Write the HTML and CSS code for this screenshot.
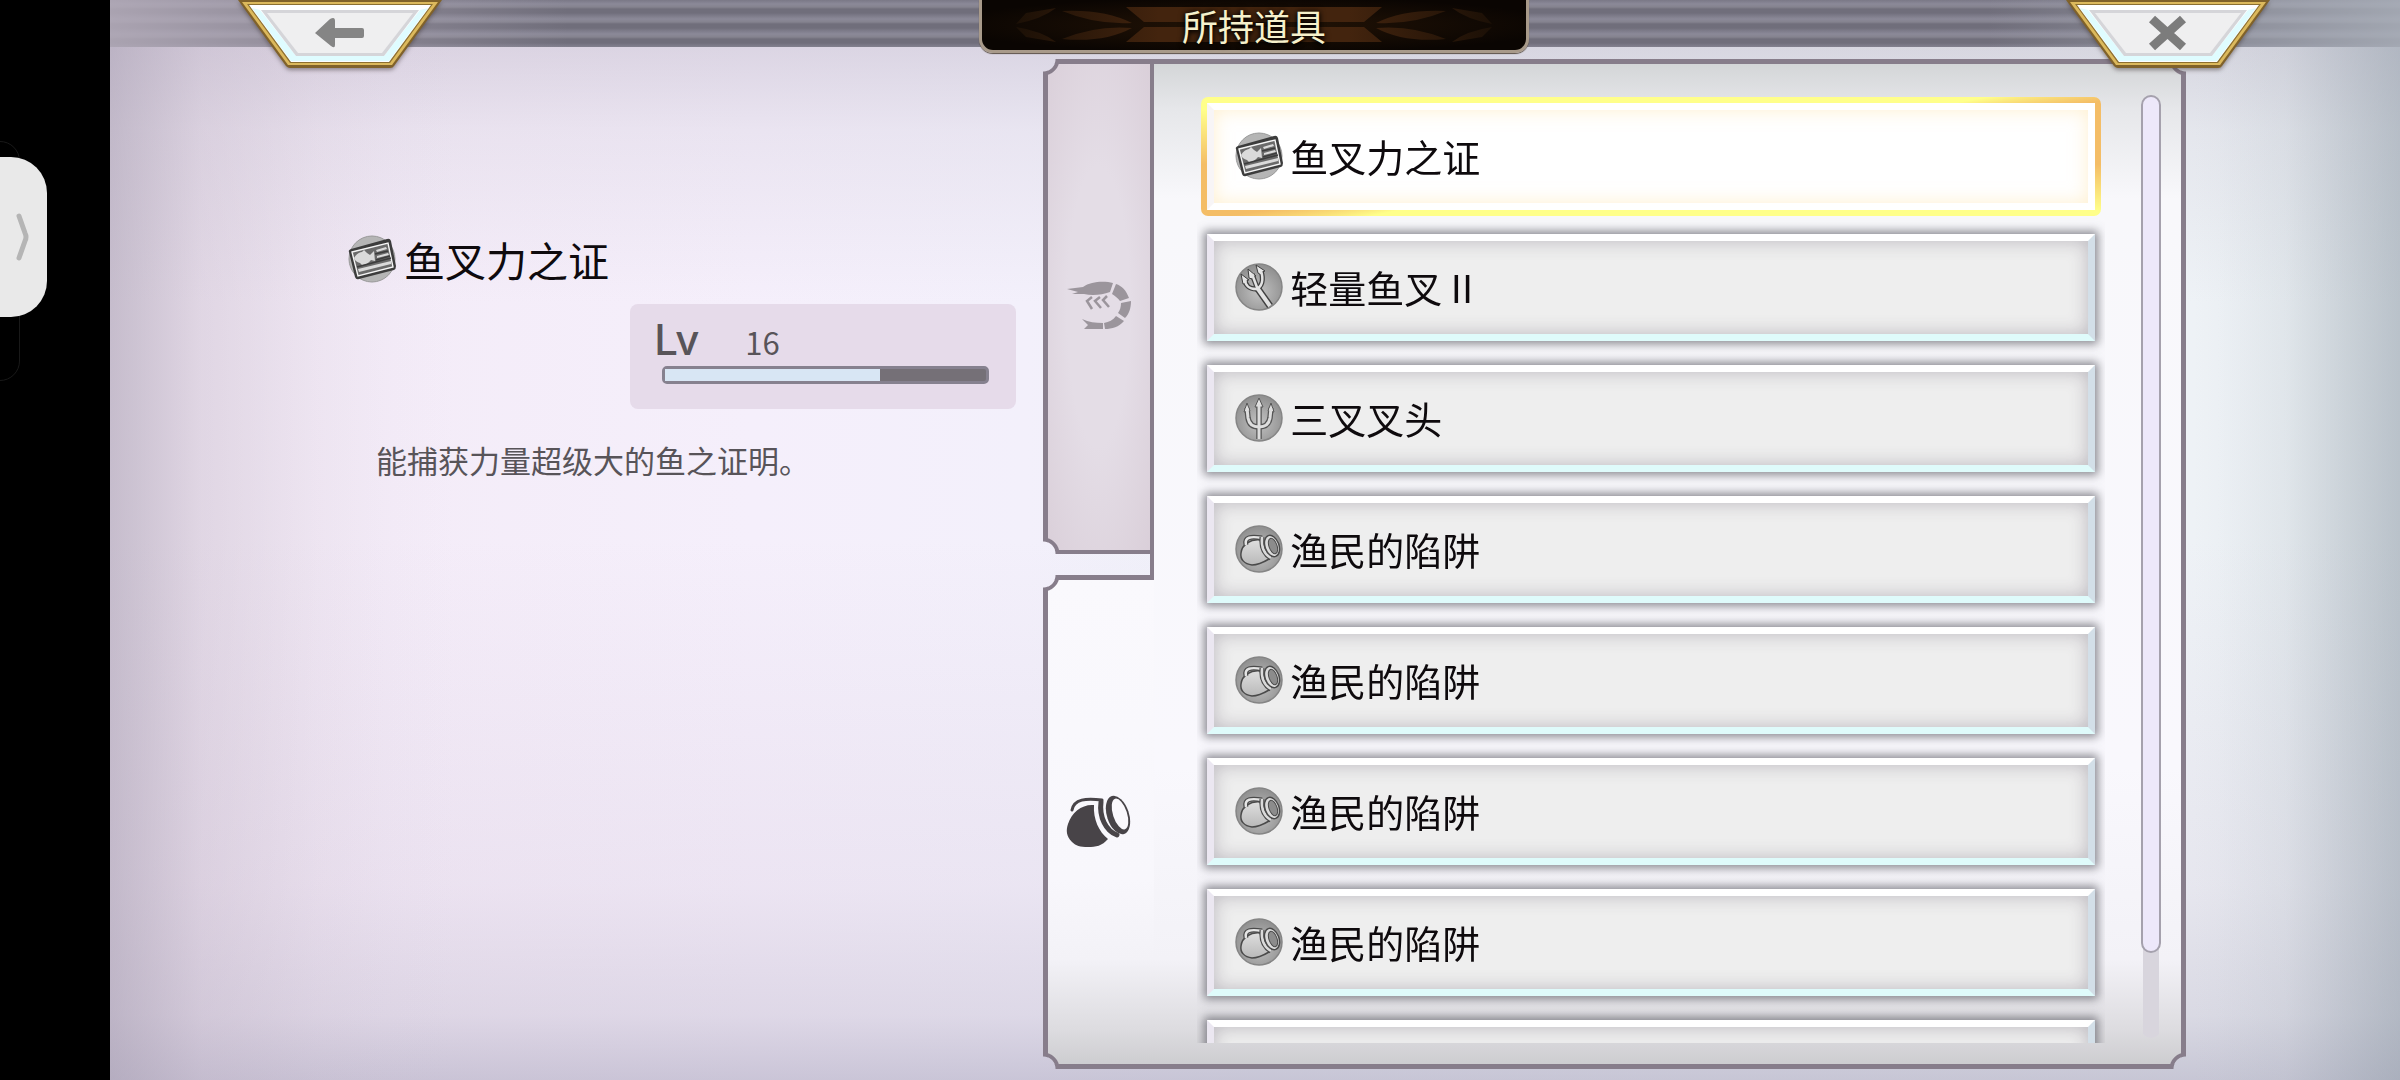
FILE: index.html
```
<!DOCTYPE html>
<html lang="zh-CN">
<head>
    <meta charset="UTF-8">
    <meta name="viewport" content="width=device-width, initial-scale=1.0">
    <title>所持道具</title>
    <link rel="stylesheet" href="styles.css">
</head>
<body>
    <!-- Item icons -->
    <svg class="sprite" width="0" height="0" aria-hidden="true">
        <defs>
            <radialGradient id="disc" cx="50%" cy="60%" r="55%">
                <stop offset="0" stop-color="#c2c2c2"/>
                <stop offset="1" stop-color="#929292"/>
            </radialGradient>
            <linearGradient id="clay" x1="0" y1="0" x2="0" y2="1">
                <stop offset="0" stop-color="#dedede"/>
                <stop offset="1" stop-color="#b9b9b9"/>
            </linearGradient>
        </defs>
        <symbol id="icon-card" viewBox="0 0 48 48">
            <circle cx="24" cy="24" r="23" fill="#b5b5b5" stroke="#999"/>
            <path d="M1 17 Q0 15 3 14 L39 4 Q42 3 43 6 L48 31 Q48 34 46 35 L11 44 Q8 45 7 42Z" fill="#3c3c3c"/>
            <path d="M4 17 L40 8 L45 32 L10 41Z" fill="#6a6a6a" stroke="#f5f5f5" stroke-width="1.4"/>
            <path d="M6 23 C8 19 12 17 14 17 L16 15 L19 18 L22 20 L26 16 L27 26 L23 25 C21 28 17 30 14 30 L12 28 C9 27 7 26 6 23Z" fill="#dadada"/>
            <path d="M28 15 L38 12 L39 14 L29 17Z M29 21 L40 18 L41 20 L29 23Z M10 34 L43 26 L43 29 L11 37Z" fill="#dadada"/>
            <path d="M27 19 L40 16 M28 25 L42 21 M9 32 L43 23" stroke="#3c3c3c" stroke-width="1.5" fill="none"/>
        </symbol>
        <symbol id="icon-harpoon" viewBox="0 0 48 48">
            <circle cx="24" cy="24" r="23" fill="url(#disc)" stroke="#858585" stroke-width="1.5"/>
            <g fill="none" stroke="#3f3f3f" stroke-width="5">
                <path d="M10 16 C10 22 14 26 21 26 C27 24 29 17 26 8"/>
                <path d="M17 11 L23 27"/>
                <path d="M23 26 L35 43" stroke-width="7"/>
            </g>
            <path d="M6 11 L14 17 L12 17 L12 20 L8 21Z M13 6 L21 13 L18 13 L17 16 L14 15Z M21 2 L30 8 L27 9 L26 12 L23 10Z" fill="#e6e6e6" stroke="#3f3f3f"/>
            <g fill="none" stroke="#e2e2e2" stroke-width="2.5">
                <path d="M10 16 C10 22 14 26 21 26 C27 24 29 17 26 8"/>
                <path d="M17 11 L23 27"/>
                <path d="M23 26 L35 43" stroke-width="4"/>
            </g>
        </symbol>
        <symbol id="icon-trident" viewBox="0 0 48 48">
            <circle cx="24" cy="24" r="23" fill="url(#disc)" stroke="#858585" stroke-width="1.5"/>
            <g fill="none" stroke="#555" stroke-width="5.5">
                <path d="M12 14 L13 24 C14 30 18 33 24 33 C30 33 34 30 35 24 L36 14"/>
                <path d="M24 10 V45"/>
            </g>
            <path d="M24 4 L28 13 H20Z M12 9 L15 17 L9 18Z M36 9 L39 18 L33 17Z" fill="#e2e2e2" stroke="#555"/>
            <g fill="none" stroke="#dedede" stroke-width="3">
                <path d="M12 14 L13 24 C14 30 18 33 24 33 C30 33 34 30 35 24 L36 14"/>
                <path d="M24 10 V45"/>
            </g>
        </symbol>
        <symbol id="icon-pot" viewBox="0 0 48 48">
            <circle cx="24" cy="24" r="23" fill="url(#disc)" stroke="#858585" stroke-width="1.5"/>
            <path d="M25 15 C16 14 7 19 6 28 C5 34 9 39 17 40 C24 40 29 37 34 34Z" fill="url(#clay)" stroke="#4a4a4a" stroke-width="1.5"/>
            <path d="M11 20 C9 12 16 11 27 13" fill="none" stroke="#4a4a4a" stroke-width="5"/>
            <path d="M11 20 C9 12 16 11 27 13" fill="none" stroke="#e5e5e5" stroke-width="2.5"/>
            <path d="M27 12 C26 22 29 29 36 33" fill="none" stroke="#4a4a4a" stroke-width="5"/>
            <path d="M27 12 C26 22 29 29 36 33" fill="none" stroke="#dadada" stroke-width="2.5"/>
            <ellipse cx="37" cy="21" rx="7" ry="11" transform="rotate(-20 37 21)" fill="#dcdcdc" stroke="#4a4a4a" stroke-width="1.5"/>
            <ellipse cx="38" cy="21" rx="4" ry="8" transform="rotate(-20 38 21)" fill="#8c8c8c" stroke="#4a4a4a"/>
        </symbol>
    </svg>

    <div class="screen">
        <aside class="side-strip">
            <div class="edge-outline"></div>
            <button class="edge-handle" aria-label="展开">
                <svg width="16" height="52" viewBox="0 0 16 52" aria-hidden="true">
                    <path d="M4 5 L10 22 Q12 26 10 30 L4 47" fill="none" stroke="#b5b5b5" stroke-width="5" stroke-linecap="round" stroke-linejoin="round"/>
                </svg>
            </button>
        </aside>

        <div class="game">
            <header class="top-bar">
                <button class="corner-btn" aria-label="返回">
                    <svg width="204" height="70" viewBox="0 0 204 70" aria-hidden="true">
                        <path d="M0 0 H204 L156 66 Q155 68 152 68 H52 Q50 68 48 66Z" fill="#80622a"/>
                        <path d="M4 2 H200 L154 65 H50Z" fill="#dcb95c"/>
                        <path d="M9 4 H195 L152 63 H52Z" fill="#8c7031"/>
                        <path d="M11 5 H193 L151 62 H53Z" fill="#fff"/>
                        <path d="M14 8 L22 10 L58 56 H146 L182 10 L190 8 L151 61 H53Z" fill="#dffcff"/>
                        <path d="M23 10 H181 L146 56 H58Z" fill="#d5d5d9"/>
                        <path d="M29 13 H175 L144 53 H60Z" fill="#efeff0"/>
                        <path d="M77 33 L92 19 Q97 16 97 21 V28 H124 Q126 28 126 30 V36 Q126 38 124 38 H97 V45 Q97 49 93 46Z" fill="#858585"/>
                    </svg>
                </button>
                <div class="title-plate">
                    <svg class="title-ornament" width="480" height="44" viewBox="0 0 480 44" aria-hidden="true">
                        <defs>
                            <linearGradient id="bronze">
                                <stop offset="0" stop-color="#1c1006"/>
                                <stop offset="0.3" stop-color="#43240e"/>
                                <stop offset="0.7" stop-color="#43240e"/>
                                <stop offset="1" stop-color="#1c1006"/>
                            </linearGradient>
                        </defs>
                        <path fill="url(#bronze)" d="M112 4 H368 L350 19 H130Z M130 24 H350 L368 39 H112Z M48 8 Q90 6 118 20 Q82 22 48 8Z M48 36 Q82 22 118 25 Q90 40 48 36Z M432 8 Q390 6 362 20 Q398 22 432 8Z M432 36 Q398 22 362 25 Q390 40 432 36Z M2 21 Q28 16 42 5 L12 10Z M2 24 Q28 28 42 39 L12 34Z M478 21 Q452 16 438 5 L468 10Z M478 24 Q452 28 438 39 L468 34Z"/>
                    </svg>
                    <h1>所持道具</h1>
                </div>
                <button class="corner-btn" aria-label="关闭">
                    <svg width="204" height="70" viewBox="0 0 204 70" aria-hidden="true">
                        <path d="M0 0 H204 L156 66 Q155 68 152 68 H52 Q50 68 48 66Z" fill="#80622a"/>
                        <path d="M4 2 H200 L154 65 H50Z" fill="#dcb95c"/>
                        <path d="M9 4 H195 L152 63 H52Z" fill="#8c7031"/>
                        <path d="M11 5 H193 L151 62 H53Z" fill="#fff"/>
                        <path d="M14 8 L22 10 L58 56 H146 L182 10 L190 8 L151 61 H53Z" fill="#dffcff"/>
                        <path d="M23 10 H181 L146 56 H58Z" fill="#d5d5d9"/>
                        <path d="M29 13 H175 L144 53 H60Z" fill="#efeff0"/>
                        <path d="M86 19 L117 47 M117 19 L86 47" stroke="#7c7c7c" stroke-width="9"/>
                    </svg>
                </button>
            </header>

            <main class="content">
                <section class="detail">
                    <h2 class="detail-name">
                        <svg class="icon" aria-hidden="true"><use href="#icon-card"/></svg>
                        鱼叉力之证
                    </h2>
                    <div class="level-box">
                        <div class="level-row">
                            <span class="level-label">Lv</span>
                            <span class="level-value">16</span>
                        </div>
                        <div class="level-bar" role="progressbar" aria-label="Lv" aria-valuenow="67" aria-valuemin="0" aria-valuemax="100">
                            <div class="level-fill" style="width: 67%"></div>
                        </div>
                    </div>
                    <p class="detail-text">能捕获力量超级大的鱼之证明。</p>
                </section>

                <section class="panel">
                    <nav class="tabs">
                        <button class="tab" aria-label="渔获">
                            <svg width="64" height="50" viewBox="0 0 64 50" fill="#9b959c" aria-hidden="true">
                                <path d="M0 8 L16 6 C24 0 38 0 46 2 L43 11 C35 14 25 15 17 13 L5 13 L11 11Z"/>
                                <path d="M49 3 C55 5 59 9 62 17 L53 20 C51 17 48 15 45 13Z"/>
                                <path d="M54 22 L64 20 C64 27 62 33 58 37 L51 32 C53 29 54 26 54 22Z"/>
                                <path d="M49 35 L57 40 C52 46 45 48 38 48 L37 42 C42 41 46 39 49 35Z"/>
                                <path d="M36 42 V48 H17 L21 44 L15 38 C22 41 28 42 36 42Z"/>
                                <path d="M25 16 L20 20 L25 28 M33 16 L28 20 L34 27 M40 15 L36 19 L42 26" fill="none" stroke="#9b959c" stroke-width="2.5"/>
                            </svg>
                        </button>
                        <div class="tab-gap"></div>
                        <button class="tab tab-active" aria-label="道具" aria-pressed="true">
                            <svg width="66" height="54" viewBox="0 0 66 54" fill="#484448" aria-hidden="true">
                                <path d="M28 10 C27 24 33 37 42 44 C36 51 30 52 22 52 C14 52 10 51 6 47 C0 41 0 35 2 29 C6 17 16 9 28 10Z"/>
                                <path d="M6 15 C8 4 20 3 36 5" fill="none" stroke="#484448" stroke-width="3" stroke-linecap="round"/>
                                <path d="M35 7 C33 22 40 36 51 40" fill="none" stroke="#484448" stroke-width="5" stroke-linecap="round"/>
                                <ellipse cx="52" cy="20" rx="11" ry="20" transform="rotate(-18 52 20)"/>
                                <ellipse cx="54" cy="19" rx="7" ry="16" transform="rotate(-18 54 19)" fill="#faf8fc"/>
                            </svg>
                        </button>
                    </nav>

                    <div class="bag">
                        <ul class="item-list">
                            <li><button class="item item-selected"><svg class="icon" aria-hidden="true"><use href="#icon-card"/></svg>鱼叉力之证</button></li>
                            <li><button class="item"><svg class="icon" aria-hidden="true"><use href="#icon-harpoon"/></svg>轻量鱼叉 II</button></li>
                            <li><button class="item"><svg class="icon" aria-hidden="true"><use href="#icon-trident"/></svg>三叉叉头</button></li>
                            <li><button class="item"><svg class="icon" aria-hidden="true"><use href="#icon-pot"/></svg>渔民的陷阱</button></li>
                            <li><button class="item"><svg class="icon" aria-hidden="true"><use href="#icon-pot"/></svg>渔民的陷阱</button></li>
                            <li><button class="item"><svg class="icon" aria-hidden="true"><use href="#icon-pot"/></svg>渔民的陷阱</button></li>
                            <li><button class="item"><svg class="icon" aria-hidden="true"><use href="#icon-pot"/></svg>渔民的陷阱</button></li>
                            <li><button class="item" aria-label="道具"></button></li>
                        </ul>
                        <div class="scroll-track">
                            <div class="scroll-thumb" style="height: 91%"></div>
                        </div>
                    </div>
                </section>
            </main>
        </div>
    </div>
</body>
</html>
```
FILE: styles.css
```
:root {
    --line: #877d8b;
    --text: #0e0a0d;
    --muted: #585459;
    --cut: 12px;
    --shade: linear-gradient(#d2d4d6, #e6e7ea 50px, #f8f8fb 140px, #f9f8fd 70%, #f3f2f7 calc(100% - 110px), #dddce0 calc(100% - 40px), #cbcbce);
}

* {
    box-sizing: border-box;
}

body {
    margin: 0;
    background: #000;
    color: var(--text);
    font-family: "Noto Sans CJK SC", "Noto Sans", sans-serif;
}

button {
    margin: 0;
    padding: 0;
    border: 0;
    background: none;
    color: inherit;
    font: inherit;
    cursor: pointer;
}

.sprite {
    position: absolute;
}

.screen {
    display: flex;
    height: 100vh;
    overflow: hidden;
}

/* Black strip with the system edge handle */
.side-strip {
    position: relative;
    flex: 0 0 110px;
    padding-top: 157px;
}

.edge-outline {
    position: absolute;
    top: 141px;
    left: -20px;
    width: 40px;
    height: 240px;
    border: 1px solid #191919;
    border-radius: 20px;
}

.edge-handle {
    position: relative;
    display: flex;
    align-items: center;
    justify-content: flex-end;
    width: 47px;
    height: 160px;
    padding-right: 16px;
    border-radius: 0 36px 36px 0;
    background: #e9e9e9;
}

.game {
    flex: 1;
    min-width: 0;
    display: flex;
    flex-direction: column;
    background:
        linear-gradient(90deg, rgba(168, 160, 180, 0.55), rgba(190, 180, 200, 0.28) 4%, rgba(200, 190, 210, 0.1) 9%, transparent 15%, transparent 91%, rgba(180, 188, 198, 0.15) 95%, rgba(150, 160, 172, 0.5)),
        linear-gradient(rgba(170, 162, 182, 0.45), rgba(190, 184, 200, 0.2) 12%, transparent 28%, transparent 50%, rgba(200, 185, 208, 0.2) 82%, rgba(180, 172, 194, 0.35) 94%, rgba(160, 155, 180, 0.5)),
        linear-gradient(90deg, #eadfea, #f4ecf8 12%, #f5effb 28%, #f3f0fb 40%, #eef0f8 50%, #eef2f6 92%, #dde4e8);
}

.top-bar {
    position: relative;
    z-index: 1;
    display: flex;
    justify-content: space-between;
    align-items: flex-start;
    height: 47px;
    padding: 0 130px 0 128px;
    background:
        linear-gradient(90deg, rgba(180, 172, 186, 0.85), transparent 20%, transparent 82%, rgba(170, 176, 186, 0.85)),
        repeating-linear-gradient(#7a7886, #8b8998 4px, #85838f 7px, #706e7b 9px, #706e7b 13px, #7a7886 15px);
}

.corner-btn svg {
    display: block;
    filter: drop-shadow(0 2px 2px rgba(60, 50, 50, 0.5));
}

.title-plate {
    display: grid;
    place-items: center;
    width: 550px;
    height: 53px;
    border: 3px solid #a89a8a;
    border-top: 0;
    border-radius: 0 0 14px 14px;
    background: radial-gradient(ellipse at center, #241406, #0a0502 80%);
    box-shadow: 0 1px 1px #5b5046;
}

.title-plate > * {
    grid-area: 1 / 1;
}

.title-plate h1 {
    margin: 0;
    color: #f6f1cb;
    font-size: 36px;
    font-weight: 400;
    line-height: 50px;
    text-shadow: 0 0 6px #000, 0 2px 4px #000;
}

.content {
    flex: 1;
    min-height: 0;
    display: grid;
    grid-template-columns: 49fr 60fr;
    padding: 12px 214px 11px 0;
}

.icon {
    flex: none;
    width: 48px;
    height: 48px;
}

/* Left: selected item */
.detail {
    display: flex;
    flex-direction: column;
    padding: 170px 27px 0 238px;
}

.detail-name {
    display: flex;
    align-items: center;
    gap: 8px;
    margin: 0;
    font-size: 41px;
    font-weight: 400;
    line-height: 60px;
}

.level-box {
    align-self: flex-end;
    width: 386px;
    height: 105px;
    margin-top: 15px;
    padding: 12px 27px 0 24px;
    border-radius: 8px;
    background: #e6dbea;
    color: var(--muted);
}

.level-row {
    display: flex;
    align-items: baseline;
    gap: 46px;
    height: 50px;
    line-height: 48px;
}

.level-label {
    font-family: Inter, sans-serif;
    font-size: 42px;
    font-weight: 500;
}

.level-value {
    font-size: 31px;
}

.level-bar {
    height: 18px;
    margin-left: 8px;
    border: 3px solid #86818f;
    border-radius: 5px;
    background: #757077;
}

.level-fill {
    height: 100%;
    background: #d8e6f4;
}

.detail-text {
    margin: 28px 0 0 28px;
    color: var(--muted);
    font-size: 31px;
    line-height: 46px;
}

/* Right: bag panel with notched corners */
.panel {
    display: flex;
    min-height: 0;
}

.tabs {
    flex: 0 0 111px;
    display: flex;
    flex-direction: column;
}

.tab {
    flex: 1;
    display: flex;
    align-items: center;
    justify-content: center;
    background:
        radial-gradient(circle at 0 0, transparent var(--cut), var(--line) 13px 16px, transparent 17px),
        radial-gradient(circle at 0 100%, transparent var(--cut), var(--line) 13px 16px, transparent 17px),
        linear-gradient(var(--line), var(--line)) 0 0 / 5px 100% no-repeat,
        linear-gradient(var(--line), var(--line)) 100% 0 / 4px 100% no-repeat,
        linear-gradient(var(--line), var(--line)) 0 0 / 100% 5px no-repeat,
        linear-gradient(var(--line), var(--line)) 0 100% / 100% 4px no-repeat,
        radial-gradient(ellipse at center, #e4dde6 40%, #d9ced8);
    mask:
        radial-gradient(circle at 0 0, transparent var(--cut), #000 13px),
        radial-gradient(circle at 0 100%, transparent var(--cut), #000 13px);
    mask-composite: intersect;
}

.tab-active {
    background:
        radial-gradient(circle at 0 0, transparent var(--cut), var(--line) 13px 16px, transparent 17px),
        radial-gradient(circle at 0 100%, transparent var(--cut), var(--line) 13px 16px, transparent 17px),
        linear-gradient(var(--line), var(--line)) 0 0 / 5px 100% no-repeat,
        linear-gradient(var(--line), var(--line)) 0 0 / 100% 5px no-repeat,
        linear-gradient(var(--line), var(--line)) 0 100% / 100% 5px no-repeat,
        linear-gradient(#faf9fd, #f8f7fc calc(100% - 190px), #f3f2f7 calc(100% - 110px), #dddce0 calc(100% - 40px), #cbcbce);
}

.tab-gap {
    flex: 0 0 21px;
    border-right: 4px solid var(--line);
}

.bag {
    flex: 1;
    min-width: 0;
    display: flex;
    gap: 36px;
    padding: 34px 25px 26px 43px;
    background:
        radial-gradient(circle at 100% 0, transparent var(--cut), var(--line) 13px 16px, transparent 17px),
        radial-gradient(circle at 100% 100%, transparent var(--cut), var(--line) 13px 16px, transparent 17px),
        linear-gradient(var(--line), var(--line)) 100% 0 / 5px 100% no-repeat,
        linear-gradient(var(--line), var(--line)) 0 0 / 100% 5px no-repeat,
        linear-gradient(var(--line), var(--line)) 0 100% / 100% 5px no-repeat,
        var(--shade);
    mask:
        radial-gradient(circle at 100% 0, transparent var(--cut), #000 13px),
        radial-gradient(circle at 100% 100%, transparent var(--cut), #000 13px);
    mask-composite: intersect;
}

.item-list {
    flex: 1;
    display: flex;
    flex-direction: column;
    gap: 24px;
    margin: 0;
    padding: 10px;
    overflow: hidden;
    list-style: none;
}

.item {
    position: relative;
    display: flex;
    align-items: center;
    gap: 7px;
    width: 100%;
    height: 107px;
    padding: 0 21px 1px;
    border: 7px solid;
    border-color: #fff #d3dfe8 #dffbfb #ebe7f1;
    background: #eee;
    box-shadow: 0 0 9px 3px rgba(90, 90, 98, 0.7), inset 0 0 18px rgba(70, 60, 80, 0.3);
    font-size: 38px;
    line-height: 56px;
    text-align: left;
}

.item-selected {
    border-color: #fff #fff #fff #f8f5f6;
    background: #fff;
    box-shadow: inset 0 0 18px rgba(255, 225, 160, 0.5);
}

/* Gold frame around the selected row */
.item-selected::before {
    content: "";
    position: absolute;
    inset: -13px;
    z-index: -1;
    border-radius: 7px;
    background: conic-gradient(#ffff8a 80deg, #f4bd66 83deg 91deg, #ffff8a 97deg, #ffff8a 258deg, #f4bd66 262deg 269deg, #ffff8a 276deg);
}

.item-list li {
    position: relative;
    z-index: 0;
}

.scroll-track {
    width: 20px;
    margin: 2px 0 5px;
    background: linear-gradient(#d8d5dd, #d8d5dd) center / 16px 100% no-repeat;
    border-radius: 10px;
}

.scroll-thumb {
    border: 2px solid #a5a1ad;
    border-radius: 10px;
    background: #ede8fa;
}
```
